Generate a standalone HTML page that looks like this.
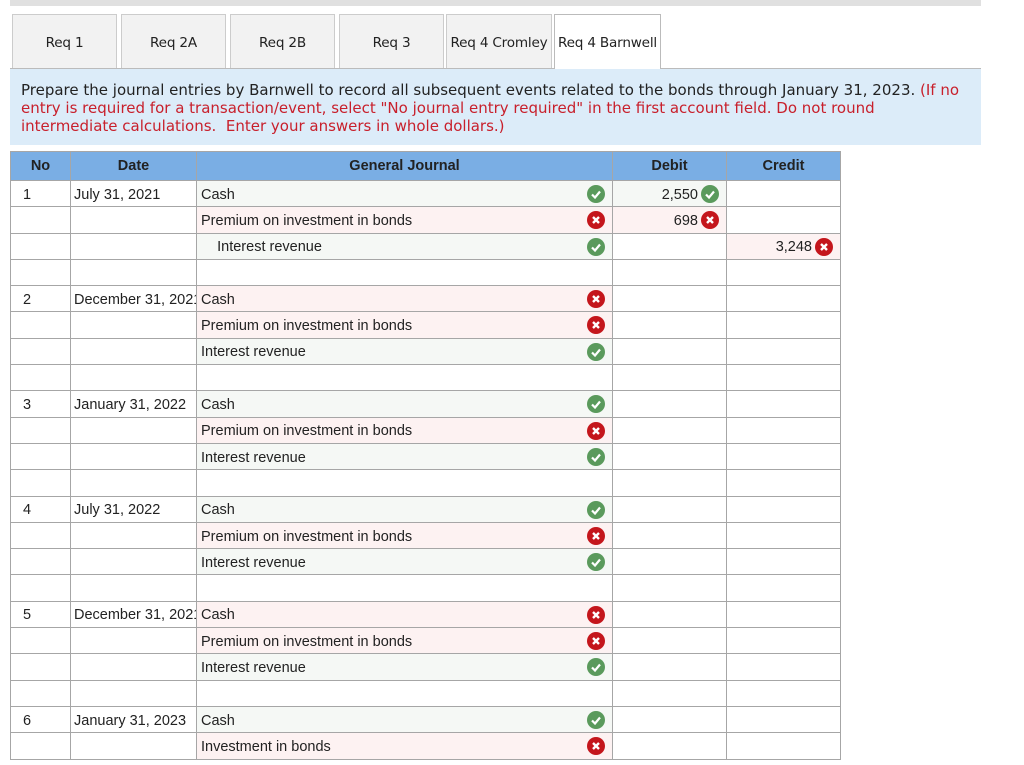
<!DOCTYPE html><html><head><style>
body{margin:0;width:1024px;height:765px;overflow:hidden;background:#fff;font-family:"Liberation Sans",Arial,sans-serif;position:relative}
.bar{position:absolute;left:10px;top:0;width:971px;height:6px;background:#e0e0e0}
.tab{position:absolute;top:14px;height:54px;width:105px;background:#f2f2f2;border:1px solid #ccc;border-bottom:none;box-sizing:border-box;font-family:"DejaVu Sans",sans-serif;font-size:13.6px;color:#222;text-align:center;line-height:56px;white-space:nowrap;letter-spacing:-0.2px;overflow:hidden}
.tab.act{background:#fff;border-color:#bbb}
.line{position:absolute;left:10px;top:68px;width:971px;height:1px;background:#bbb}
.ins{position:absolute;left:10px;top:69px;width:971px;height:76px;background:#dcecf9;box-sizing:border-box;padding:12px 20px 12px 11px;font-family:"DejaVu Sans",sans-serif;font-size:15px;line-height:18px;color:#222}
.ins .r{color:#c8202c}
table{position:absolute;left:10px;top:151px;width:830px;border-collapse:collapse;table-layout:fixed;font-size:14.5px;color:#222}
td,th{border:1px solid #a6a6a6;height:23.3px;padding:2px 4px 0;white-space:nowrap;overflow:hidden;position:relative}
th{background:#7aaee4;height:28px;font-weight:bold;font-size:14.5px;padding:0}
.g{background:#f5f8f5}.p{background:#fdf2f2}
.ic{position:absolute;right:7px;top:4px;width:18px;height:18px;border-radius:50%}
.ok{background:#5a9a5c}.no{background:#c4161c}
.ic svg{position:absolute;left:0;top:0}
.n{text-align:right;padding-right:28px}
</style></head><body>
<div class="bar"></div>
<div class="tab" style="left:12px">Req 1</div>
<div class="tab" style="left:121px">Req 2A</div>
<div class="tab" style="left:230px">Req 2B</div>
<div class="tab" style="left:339px">Req 3</div>
<div class="tab" style="left:446px;width:106px">Req 4 Cromley</div>
<div class="tab act" style="left:554px;width:107px;height:55px">Req 4 Barnwell</div>
<div class="line" style="width:544px"></div><div class="line" style="left:661px;width:320px"></div>
<div class="ins">Prepare the journal entries by Barnwell to record all subsequent events related to the bonds through January 31, 2023. <span class="r">(If no entry is required for a transaction/event, select "No journal entry required" in the first account field. Do not round intermediate calculations.&nbsp; Enter your answers in whole dollars.)</span></div>
<table>
<colgroup><col style="width:60px"><col style="width:126px"><col style="width:416px"><col style="width:114px"><col style="width:114px"></colgroup>
<tr><th>No</th><th>Date</th><th>General Journal</th><th>Debit</th><th>Credit</th></tr>
<tbody id="b"></tbody>
</table>
<script>
var OK='<span class="ic ok"><svg width="18" height="18"><path d="M5 9.5l3 3 5-6" stroke="#fff" stroke-width="2.2" fill="none"/></svg></span>';
var NO='<span class="ic no"><svg width="18" height="18"><path d="M6 6l6 6M12 6l-6 6" stroke="#fff" stroke-width="2.4"/></svg></span>';
var g=[["1","July 31, 2021",[["Cash",1,["2,550",1]],["Premium on investment in bonds",0,["698",0]],["&nbsp;&nbsp;&nbsp;&nbsp;Interest revenue",1,null,["3,248",0]]]],
["2","December 31, 2021",[["Cash",0],["Premium on investment in bonds",0],["Interest revenue",1]]],
["3","January 31, 2022",[["Cash",1],["Premium on investment in bonds",0],["Interest revenue",1]]],
["4","July 31, 2022",[["Cash",1],["Premium on investment in bonds",0],["Interest revenue",1]]],
["5","December 31, 2021",[["Cash",0],["Premium on investment in bonds",0],["Interest revenue",1]]],
["6","January 31, 2023",[["Cash",1],["Investment in bonds",0]]]];
var h='';
g.forEach(function(e,i){e[2].forEach(function(r,j){
var cl=r[1]?'g':'p';
var d=r[2]?'<td class="n '+(r[2][1]?'g':'p')+'">'+r[2][0]+(r[2][1]?OK:NO)+'</td>':'<td></td>';
var c=r[3]?'<td class="n '+(r[3][1]?'g':'p')+'">'+r[3][0]+(r[3][1]?OK:NO)+'</td>':'<td></td>';
h+='<tr><td style="padding-left:12px">'+(j?'':e[0])+'</td><td style="padding-left:'+(e[1][0]=='D'||e[1][0]=='J'?3:6)+'px;padding-right:0">'+(j?'':e[1])+'</td><td class="'+cl+'">'+r[0]+(r[1]?OK:NO)+'</td>'+d+c+'</tr>';});
if(i<5)h+='<tr><td></td><td></td><td></td><td></td><td></td></tr>';});
document.getElementById('b').innerHTML=h;
</script>
</body></html>
